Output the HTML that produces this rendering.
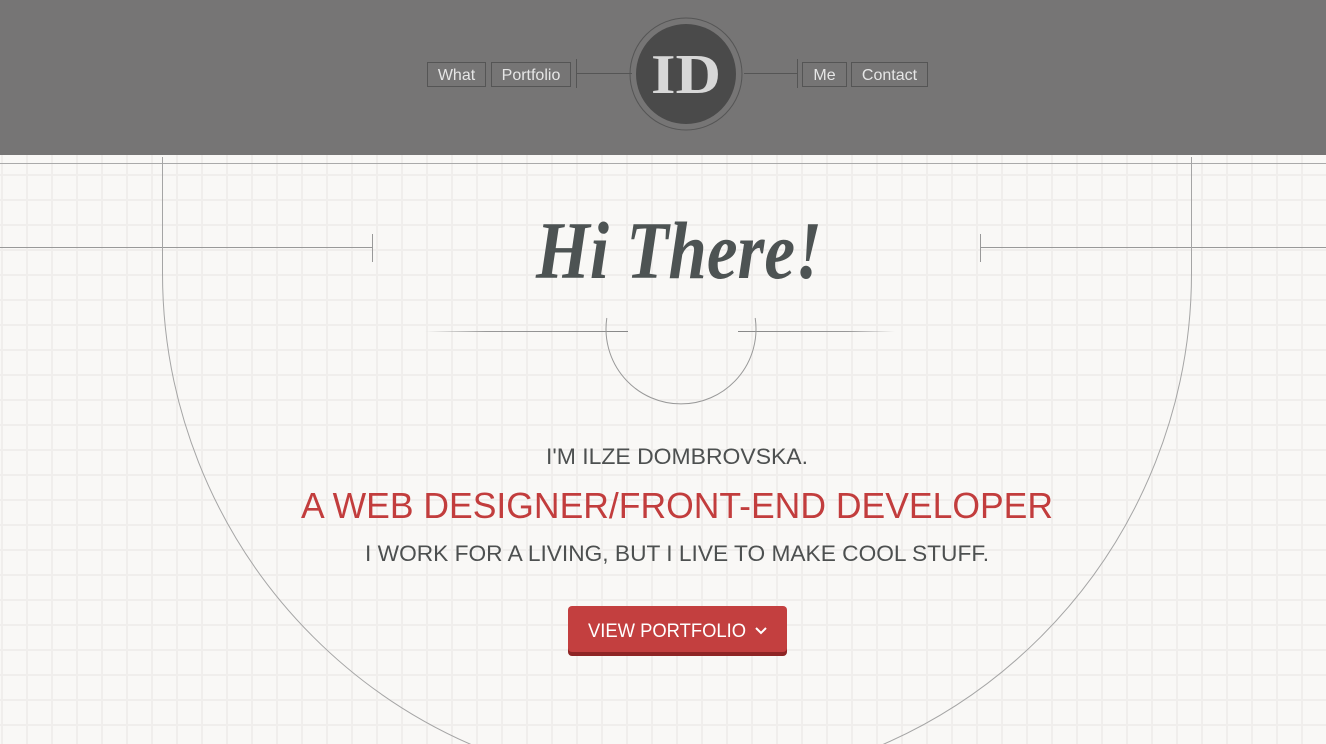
<!DOCTYPE html>
<html><head><meta charset="utf-8"><style>
html,body{margin:0;padding:0;width:1326px;height:744px;overflow:hidden;background:#f9f8f6;font-family:"Liberation Sans",sans-serif}
.grid{position:absolute;left:0;top:155px;width:1326px;height:589px;
background-image:linear-gradient(#f0eeec 2px,transparent 2px),linear-gradient(90deg,#f0eeec 2px,transparent 2px);
background-size:25px 25px;background-position:0 19px,1px 0}
.hdr{position:absolute;left:0;top:0;width:1326px;height:155px;background:#767575}
</style></head><body>
<div class="hdr"></div>
<div class="grid"></div>
<svg width="1326" height="744" style="position:absolute;left:0;top:0" xmlns="http://www.w3.org/2000/svg">
<defs>
<linearGradient id="fl" x1="0" x2="1"><stop offset="0" stop-color="#999" stop-opacity="0"/><stop offset="0.3" stop-color="#999"/><stop offset="1" stop-color="#888"/></linearGradient>
<linearGradient id="fr" x1="0" x2="1"><stop offset="0" stop-color="#888"/><stop offset="0.7" stop-color="#999"/><stop offset="1" stop-color="#999" stop-opacity="0"/></linearGradient>
</defs>
<g fill="none" stroke="#555" stroke-width="1">
<rect x="427.5" y="62.5" width="58" height="24"/>
<rect x="491.5" y="62.5" width="79" height="24"/>
<rect x="802.5" y="62.5" width="44" height="24"/>
<rect x="851.5" y="62.5" width="76" height="24"/>
<line x1="576.5" y1="59" x2="576.5" y2="88"/>
<line x1="576" y1="73.5" x2="632" y2="73.5"/>
<line x1="744" y1="73.5" x2="797" y2="73.5"/>
<line x1="797.5" y1="59" x2="797.5" y2="88"/>
<circle cx="686" cy="74" r="56" stroke="#555"/>
</g>
<circle cx="686" cy="74" r="50" fill="#4a4a4a"/>
<text x="686" y="93" text-anchor="middle" font-family="Liberation Serif" font-weight="bold" font-size="56" fill="#d8d8d8" textLength="70" lengthAdjust="spacingAndGlyphs">ID</text>
<g font-size="16" fill="#e6e6e6" text-anchor="middle">
<text x="456.5" y="80">What</text>
<text x="531" y="80">Portfolio</text>
<text x="824.5" y="80">Me</text>
<text x="889.5" y="80">Contact</text>
</g>
<line x1="0" y1="163.5" x2="1326" y2="163.5" stroke="#aaa"/>
<line x1="0" y1="247.5" x2="372" y2="247.5" stroke="#999"/>
<line x1="372.5" y1="234" x2="372.5" y2="262" stroke="#999"/>
<line x1="980.5" y1="234" x2="980.5" y2="262" stroke="#999"/>
<line x1="981" y1="247.5" x2="1326" y2="247.5" stroke="#999"/>
<path d="M162.5 157 L162.5 273 A514.5 514.5 0 0 0 1191.5 273 L1191.5 157" fill="none" stroke="#a5a5a5"/>
<rect x="425" y="331" width="203" height="1" fill="url(#fl)"/>
<rect x="738" y="331" width="157" height="1" fill="url(#fr)"/>
<path d="M606.8 318 A75 75 0 1 0 755.2 318" fill="none" stroke="#999"/>
<text x="679" y="278" text-anchor="middle" font-family="Liberation Serif" font-style="italic" font-weight="bold" font-size="82" fill="#4d5353" textLength="286" lengthAdjust="spacingAndGlyphs">Hi There!</text>
<text x="677" y="464" text-anchor="middle" font-size="22" fill="#4d5050" textLength="262" lengthAdjust="spacingAndGlyphs">I'M ILZE DOMBROVSKA.</text>
<text x="677" y="518" text-anchor="middle" font-size="36" fill="#c23d3d" textLength="752" lengthAdjust="spacingAndGlyphs">A WEB DESIGNER/FRONT-END DEVELOPER</text>
<text x="677" y="561" text-anchor="middle" font-size="22" fill="#4d5050" textLength="624" lengthAdjust="spacingAndGlyphs">I WORK FOR A LIVING, BUT I LIVE TO MAKE COOL STUFF.</text>
<rect x="568" y="609" width="219" height="47" rx="4" fill="#8e2525"/>
<rect x="568" y="606" width="219" height="46" rx="4" fill="#c33f3f"/>
<text x="667" y="637" text-anchor="middle" font-size="19" fill="#fff" textLength="158" lengthAdjust="spacingAndGlyphs">VIEW PORTFOLIO</text>
<path d="M756 628 L761 633 L766 628" fill="none" stroke="#fff" stroke-width="2"/>
</svg>
</body></html>
